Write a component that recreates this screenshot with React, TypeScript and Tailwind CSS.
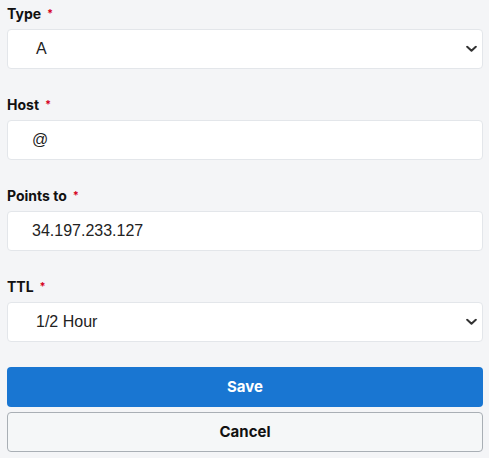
import React from "react";

const Chevron = () => (
  <svg width="11" height="7" viewBox="0 0 11 7" className="absolute right-[4px] top-1/2 -translate-y-1/2 mr-[1px]">
    <path d="M1.2 1.2 L5.5 5.3 L9.8 1.2" fill="none" stroke="#333" strokeWidth="2" strokeLinecap="round" strokeLinejoin="round" />
  </svg>
);

function Label({ text }: { text: string }) {
  return (
    <div className="flex items-start h-5 mb-[5px] font-['Inter',sans-serif] text-[14px] leading-5 font-bold text-[#111]">
      <span>{text}</span>
      <span className="ml-[6px] mt-[1px] text-[#d6001c] text-[11px] leading-4">*</span>
    </div>
  );
}

function Box({ value, select }: { value: string; select?: boolean }) {
  return (
    <div className={`relative h-10 bg-white border border-[#e3e6ea] rounded-[4px] flex items-center ${select ? "pl-[28px]" : "pl-[24px]"} font-['Liberation_Sans',Arial,sans-serif] text-[16px] text-[#222]`}>
      <span>{value}</span>
      {select && <Chevron />}
    </div>
  );
}

export default function App() {
  return (
    <div className="w-[489px] h-[458px] bg-[#f4f5f7] pl-[7px] pr-[6px] pt-[4px]">
      <Label text="Type" />
      <Box value="A" select />
      <div className="h-[26px]" />
      <Label text="Host" />
      <Box value="@" />
      <div className="h-[26px]" />
      <Label text="Points to" />
      <Box value="34.197.233.127" />
      <div className="h-[26px]" />
      <Label text="TTL" />
      <Box value="1/2 Hour" select />
      <button className="mt-[25px] w-full h-10 rounded-[4px] bg-[#1976d2] text-white font-['Inter',sans-serif] font-bold text-[15px] flex items-center justify-center">
        Save
      </button>
      <button className="mt-[5px] w-full h-10 rounded-[4px] bg-[#f5f7f8] border border-[#a9afb5] text-[#111] font-['Inter',sans-serif] font-bold text-[15px] flex items-center justify-center">
        Cancel
      </button>
    </div>
  );
}
